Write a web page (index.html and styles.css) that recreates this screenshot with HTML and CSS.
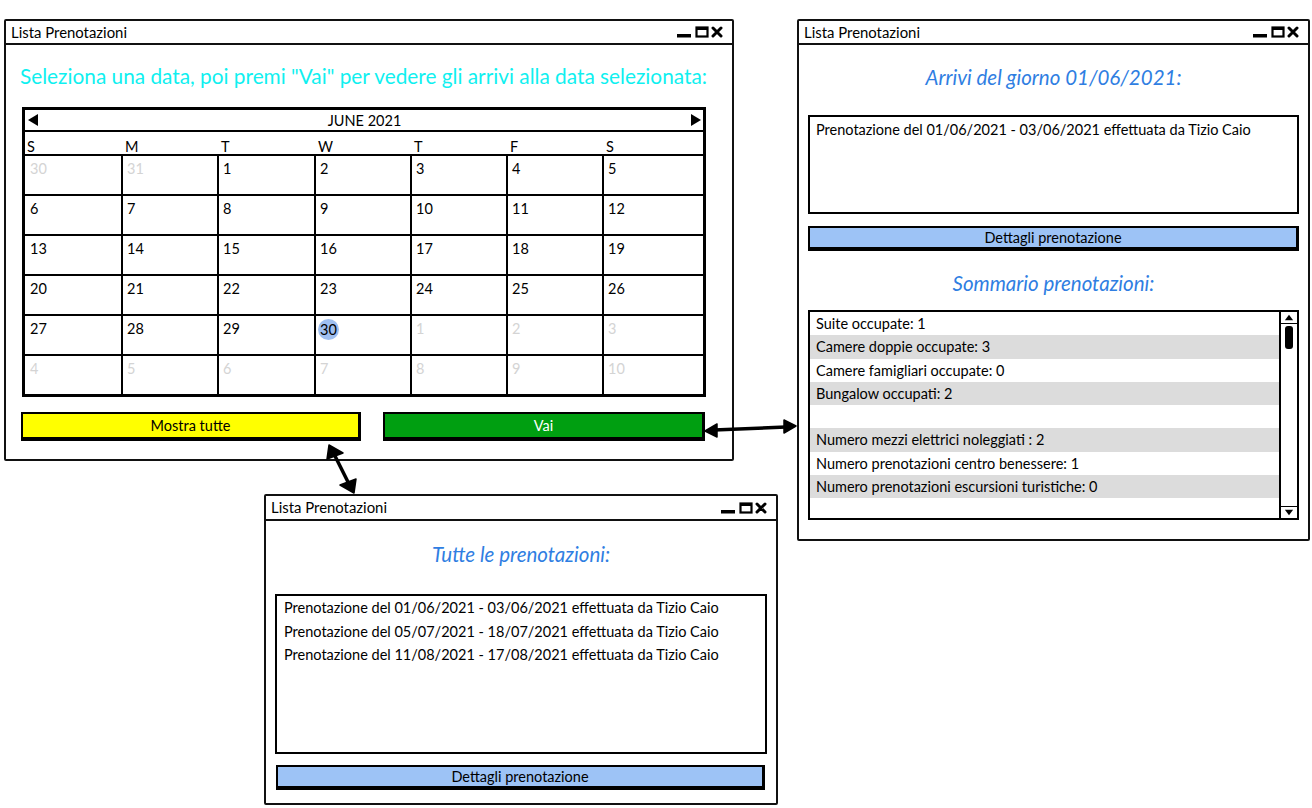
FILE: index.html
```html
<!DOCTYPE html>
<html lang="it">
<head>
<meta charset="utf-8">
<title>Lista Prenotazioni</title>
<link rel="stylesheet" href="styles.css">
</head>
<body>
<div class="canvas">

  <!-- Window 1: calendar -->
  <section class="window win-cal">
    <header class="titlebar">
      <span class="title">Lista Prenotazioni</span>
      <svg class="controls" width="46" height="12" viewBox="0 0 46 12">
        <rect x="0" y="8" width="14" height="3.5" fill="#000"/>
        <rect x="19.5" y="1.5" width="11" height="9" fill="none" stroke="#000" stroke-width="2.2"/>
        <rect x="19.5" y="1" width="11" height="3" fill="#000"/>
        <path d="M36 2 L44 10 M44 2 L36 10" stroke="#000" stroke-width="3" stroke-linecap="round"/>
      </svg>
    </header>
    <div class="win-body">
      <h1 class="heading-cyan">Seleziona una data, poi premi "Vai" per vedere gli arrivi alla data selezionata:</h1>
      <div class="calendar">
        <div class="cal-month">
          <svg width="10" height="12" viewBox="0 0 10 12"><path d="M10 0 L0 6 L10 12 Z" fill="#000"/></svg>
          <span>JUNE 2021</span>
          <svg width="10" height="12" viewBox="0 0 10 12"><path d="M0 0 L10 6 L0 12 Z" fill="#000"/></svg>
        </div>
        <div class="cal-days">
          <span>S</span><span>M</span><span>T</span><span>W</span><span>T</span><span>F</span><span>S</span>
        </div>
        <div class="cal-grid">
          <div class="cell off">30</div><div class="cell off">31</div><div class="cell">1</div><div class="cell">2</div><div class="cell">3</div><div class="cell">4</div><div class="cell">5</div>
          <div class="cell">6</div><div class="cell">7</div><div class="cell">8</div><div class="cell">9</div><div class="cell">10</div><div class="cell">11</div><div class="cell">12</div>
          <div class="cell">13</div><div class="cell">14</div><div class="cell">15</div><div class="cell">16</div><div class="cell">17</div><div class="cell">18</div><div class="cell">19</div>
          <div class="cell">20</div><div class="cell">21</div><div class="cell">22</div><div class="cell">23</div><div class="cell">24</div><div class="cell">25</div><div class="cell">26</div>
          <div class="cell">27</div><div class="cell">28</div><div class="cell">29</div><div class="cell"><span class="sel">30</span></div><div class="cell off">1</div><div class="cell off">2</div><div class="cell off">3</div>
          <div class="cell off">4</div><div class="cell off">5</div><div class="cell off">6</div><div class="cell off">7</div><div class="cell off">8</div><div class="cell off">9</div><div class="cell off">10</div>
        </div>
      </div>
      <div class="btn-row">
        <div class="btn btn-yellow">Mostra tutte</div>
        <div class="btn btn-green">Vai</div>
      </div>
    </div>
  </section>

  <!-- Window 2: arrivals -->
  <section class="window win-arr">
    <header class="titlebar">
      <span class="title">Lista Prenotazioni</span>
      <svg class="controls" width="46" height="12" viewBox="0 0 46 12">
        <rect x="0" y="8" width="14" height="3.5" fill="#000"/>
        <rect x="19.5" y="1.5" width="11" height="9" fill="none" stroke="#000" stroke-width="2.2"/>
        <rect x="19.5" y="1" width="11" height="3" fill="#000"/>
        <path d="M36 2 L44 10 M44 2 L36 10" stroke="#000" stroke-width="3" stroke-linecap="round"/>
      </svg>
    </header>
    <div class="win-body pad-side">
      <h2 class="heading-blue h-arrivi">Arrivi del giorno 01/06/2021:</h2>
      <div class="listbox list-arrivi">
        <div class="list-item">Prenotazione del 01/06/2021 - 03/06/2021 effettuata da Tizio Caio</div>
      </div>
      <div class="btn btn-blue btn-dett1">Dettagli prenotazione</div>
      <h2 class="heading-blue h-sommario">Sommario prenotazioni:</h2>
      <div class="listbox list-sommario">
        <div class="rows">
          <div class="row">Suite occupate: 1</div>
          <div class="row alt">Camere doppie occupate: 3</div>
          <div class="row">Camere famigliari occupate: 0</div>
          <div class="row alt">Bungalow occupati: 2</div>
          <div class="row"></div>
          <div class="row alt">Numero mezzi elettrici noleggiati : 2</div>
          <div class="row">Numero prenotazioni centro benessere: 1</div>
          <div class="row alt">Numero prenotazioni escursioni turistiche: 0</div>
          <div class="row"></div>
        </div>
        <div class="scrollbar">
          <svg class="sb-up" width="14" height="12" viewBox="0 0 14 12"><path d="M2.5 9 L7 3 L11.5 9 Z" fill="#000"/></svg>
          <div class="sb-thumb"></div>
          <div class="sb-track"></div>
          <svg class="sb-down" width="14" height="12" viewBox="0 0 14 12"><path d="M2.5 3 L7 9 L11.5 3 Z" fill="#000"/></svg>
        </div>
      </div>
    </div>
  </section>

  <!-- Window 3: all bookings -->
  <section class="window win-all">
    <header class="titlebar">
      <span class="title">Lista Prenotazioni</span>
      <svg class="controls" width="46" height="12" viewBox="0 0 46 12">
        <rect x="0" y="8" width="14" height="3.5" fill="#000"/>
        <rect x="19.5" y="1.5" width="11" height="9" fill="none" stroke="#000" stroke-width="2.2"/>
        <rect x="19.5" y="1" width="11" height="3" fill="#000"/>
        <path d="M36 2 L44 10 M44 2 L36 10" stroke="#000" stroke-width="3" stroke-linecap="round"/>
      </svg>
    </header>
    <div class="win-body pad-side">
      <h2 class="heading-blue h-tutte">Tutte le prenotazioni:</h2>
      <div class="listbox list-tutte">
        <div class="list-item">Prenotazione del 01/06/2021 - 03/06/2021 effettuata da Tizio Caio</div>
        <div class="list-item">Prenotazione del 05/07/2021 - 18/07/2021 effettuata da Tizio Caio</div>
        <div class="list-item">Prenotazione del 11/08/2021 - 17/08/2021 effettuata da Tizio Caio</div>
      </div>
      <div class="btn btn-blue btn-dett2">Dettagli prenotazione</div>
    </div>
  </section>

  <!-- connectors -->
  <svg class="connectors" width="1312" height="808" viewBox="0 0 1312 808">
    <g stroke="#000" stroke-width="3.5" stroke-linecap="round" fill="#000">
      <line x1="334" y1="454" x2="349" y2="484"/>
      <line x1="714" y1="430" x2="786" y2="427"/>
    </g>
    <g fill="#000" stroke="#000" stroke-width="1.5" stroke-linejoin="round">
      <path d="M329 445 L343 453 L327 459 Z"/>
      <path d="M354 493 L340 485 L356 479 Z"/>
      <path d="M705 431 L717 424 L717 437 Z"/>
      <path d="M796 426 L784 420 L784 433 Z"/>
    </g>
  </svg>

</div>
</body>
</html>
```

FILE: styles.css
```css
* { box-sizing: border-box; }

html, body {
  margin: 0;
  padding: 0;
  background: #fff;
}

body {
  font-family: "Lato", "Noto Sans", "Liberation Sans", sans-serif;
  color: #000;
  font-size: 14.5px;
}

.canvas {
  position: relative;
  width: 1312px;
  height: 808px;
  overflow: hidden;
}

/* ---------- windows ---------- */
.window {
  position: absolute;
  background: #fff;
  border: 2px solid #111;
  border-radius: 2px;
  display: flex;
  flex-direction: column;
}

.win-cal { left: 4px; top: 19px; width: 730px; height: 442px; }
.win-arr { left: 797px; top: 19px; width: 513px; height: 522px; }
.win-all { left: 264px; top: 494px; width: 514px; height: 311px; }

.titlebar {
  height: 24px;
  flex: none;
  border-bottom: 2px solid #111;
  display: flex;
  align-items: center;
  justify-content: space-between;
  padding: 0 9px 0 5px;
}

.title {
  font-size: 14.9px;
  line-height: 1;
}

.controls { display: block; }

.win-all .titlebar { height: 25px; }

.win-body {
  flex: 1;
  display: flex;
  flex-direction: column;
}

.pad-side { padding: 0 9px; }

/* ---------- headings ---------- */
h1, h2 { margin: 0; font-weight: normal; }

.heading-cyan {
  color: #0ff0f0;
  font-size: 20.8px;
  line-height: 24px;
  margin: 19px 0 0 14px;
  white-space: nowrap;
}

.heading-blue {
  color: #2f7ee2;
  font-style: italic;
  font-size: 20.5px;
  line-height: 24px;
  text-align: center;
}

.h-arrivi { margin-top: 20px; }
.h-sommario { margin-top: 20px; }
.h-tutte { margin-top: 21px; }

/* ---------- calendar ---------- */
.calendar {
  margin: 19px 0 0 16px;
  width: 684px;
  border: 3px solid #000;
}

.cal-month {
  height: 22px;
  border-bottom: 2px solid #000;
  display: flex;
  align-items: center;
  justify-content: space-between;
  padding: 0 2px 0 3px;
  font-size: 14.5px;
}

.cal-days,
.cal-grid {
  display: grid;
  grid-template-columns: 96px 94px 95px 94px 94px 94px 1fr;
}

.cal-days {
  height: 24px;
  border-bottom: 2px solid #000;
  align-items: center;
  column-gap: 2px;
  padding-top: 6px;
}

.cal-days span { padding-left: 2px; }

.cal-grid {
  grid-auto-rows: 38px;
  gap: 2px;
  background: #000;
}

.cell {
  background: #fff;
  padding: 4px 0 0 4px;
  line-height: 18px;
}

.cal-grid .cell:nth-child(7n+1) { padding-left: 5px; }

.cell.off { color: #d4d4d4; }

.sel {
  display: inline-block;
  margin-left: -2px;
  margin-top: -1px;
  width: 21px;
  height: 21px;
  line-height: 21px;
  border-radius: 50%;
  background: #9fbff0;
  text-align: center;
}

/* ---------- buttons ---------- */
.btn-row {
  margin: 15px 0 0 15px;
  width: 684px;
  display: grid;
  grid-template-columns: 340px 1fr;
  gap: 22px;
}

.btn {
  height: 29px;
  border: 2px solid #000;
  border-right-width: 3px;
  border-bottom-width: 4px;
  display: flex;
  align-items: center;
  justify-content: center;
  line-height: 1;
  padding-top: 1px;
}

.btn-yellow { background: #ffff00; }
.btn-green { background: #009f11; color: #fff; }
.btn-blue { background: #9dc3f6; height: 25px; }

.btn-dett1 { margin-top: 12px; }
.btn-dett2 { margin-top: 11px; margin-left: 1px; margin-right: 2px; }

/* ---------- list boxes ---------- */
.listbox {
  border: 2px solid #000;
  background: #fff;
}

.list-arrivi {
  margin-top: 26px;
  height: 99px;
  padding: 4px 6px;
}

.list-tutte {
  margin-top: 28px;
  height: 160px;
  padding: 0 7px;
}

.list-item {
  line-height: 23.5px;
}

.list-arrivi .list-item { line-height: 18px; }

.list-sommario {
  margin-top: 15px;
  height: 210px;
  display: flex;
  overflow: hidden;
}

.rows { flex: 1; }

.row {
  height: 23.3px;
  line-height: 23px;
  padding-left: 6px;
}

.row.alt { background: #dcdcdc; }

.scrollbar {
  width: 18px;
  flex: none;
  border-left: 2px solid #000;
  display: flex;
  flex-direction: column;
  align-items: center;
}

.sb-up {
  display: block;
  border-bottom: 1.5px solid #000;
  width: 16px;
}

.sb-thumb {
  margin-top: 2px;
  width: 8px;
  height: 23px;
  background: #000;
  border-radius: 3px;
}

.sb-track { flex: 1; }

.sb-down {
  display: block;
  border-top: 1.5px solid #000;
  width: 16px;
}

/* ---------- connectors ---------- */
.connectors {
  position: absolute;
  left: 0;
  top: 0;
  pointer-events: none;
}
```
